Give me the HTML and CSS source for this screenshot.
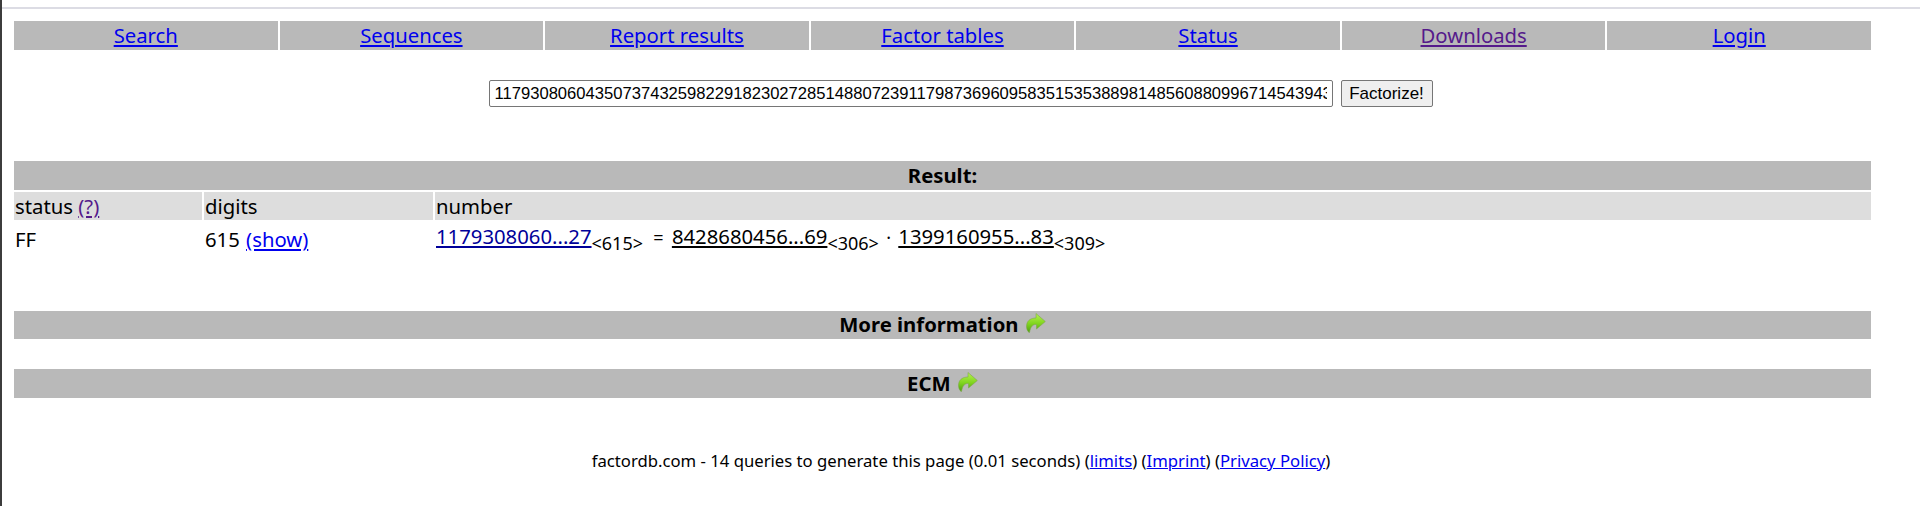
FILE: index.html
```html
<!DOCTYPE html>
<html lang="en">
<head>
    <meta charset="UTF-8">
    <meta name="viewport" content="width=device-width, initial-scale=1.0">
    <title>factordb.com</title>
    <link rel="stylesheet" href="styles.css">
</head>
<body>

<div class="topline"></div>

<div class="page">
    <nav class="nav">
        <div class="nav-cell"><a href="#search">Search</a></div>
        <div class="nav-cell"><a href="#sequences">Sequences</a></div>
        <div class="nav-cell"><a href="#report">Report results</a></div>
        <div class="nav-cell"><a href="#tables">Factor tables</a></div>
        <div class="nav-cell"><a href="#status">Status</a></div>
        <div class="nav-cell"><a class="visited" href="#downloads">Downloads</a></div>
        <div class="nav-cell"><a href="#login">Login</a></div>
    </nav>

    <form class="search" onsubmit="return false">
        <input class="search-input" type="text" value="117930806043507374325982291823027285148807239117987369609583515353889814856088099671454394343">
        <button class="search-button" type="submit">Factorize!</button>
    </form>

    <div class="bar result-bar">Result:</div>
    <div class="result-grid">
        <div class="head">status <a class="visited" href="#help">(?)</a></div>
        <div class="head">digits</div>
        <div class="head">number</div>
        <div class="val">FF</div>
        <div class="val">615 <a href="#show">(show)</a></div>
        <div class="val num">
            <a class="num-link" href="#n">1179308060...27</a><sub>&lt;615&gt;</sub>
            <span class="eq">=</span>
            <a class="factor" href="#p">8428680456...69</a><sub>&lt;306&gt;</sub>
            <span class="dot">·</span>
            <a class="factor" href="#q">1399160955...83</a><sub>&lt;309&gt;</sub>
        </div>
    </div>

    <div class="bar more-bar">More information
        <svg class="arrow" viewBox="0 0 20 20"><use href="#go"></use></svg>
    </div>
    <div class="bar ecm-bar">ECM
        <svg class="arrow" viewBox="0 0 20 20"><use href="#go"></use></svg>
    </div>

    <p class="footer">factordb.com - 14 queries to generate this page (0.01 seconds) (<a href="#limits">limits</a>) (<a href="#imprint">Imprint</a>) (<a href="#privacy">Privacy Policy</a>)</p>
</div>

<svg class="defs" width="0" height="0">
    <defs>
        <linearGradient id="green" x1="0" y1="0" x2="0" y2="1">
            <stop offset="0" stop-color="#b6f24e"/>
            <stop offset="0.55" stop-color="#7fd41e"/>
            <stop offset="1" stop-color="#4f9e12"/>
        </linearGradient>
        <path id="go" d="M10 0.5 L19.3 8.5 L10.5 16 L10.5 11.5 C7 11 4.5 13.5 3.5 19.5 C1.5 19 0 15 0.7 11.5 C1.5 7 5.5 5 10 5 Z" fill="url(#green)" stroke="#7da84a" stroke-width="0.6"/>
    </defs>
</svg>

</body>
</html>
```

FILE: styles.css
```css
html, body {
    margin: 0;
    height: 100%;
}
body {
    font-family: "Noto Sans", sans-serif;
    font-size: 20.3px;
    color: #000;
    background-color: #fff;
    border-left: 2px solid #3c3c3c;
    box-sizing: border-box;
    overflow: hidden;
}
a {
    color: #0000ee;
}
a.visited {
    color: #551a8b;
}
.topline {
    height: 2px;
    margin-top: 7px;
    background-color: #dcdce4;
}
.page {
    padding: 12px 49px 0 12px;
}
.nav {
    display: grid;
    grid-template-columns: repeat(7, 1fr);
    gap: 2px;
}
.nav-cell {
    height: 29px;
    line-height: 29px;
    text-align: center;
    background-color: #b9b9b9;
}
.search {
    display: flex;
    justify-content: center;
    gap: 8px;
    margin-top: 30px;
    padding-left: 36px;
}
.search-input,
.search-button {
    font-family: "Liberation Sans", Arial, sans-serif;
    height: 27px;
    box-sizing: border-box;
    border: 1px solid #767676;
    border-radius: 2px;
}
.search-input {
    width: 844px;
    padding: 1px 5px;
    font-size: 16.6px;
    color: #000;
}
.search-button {
    width: 92px;
    padding: 0;
    font-size: 17px;
    background-color: #efefef;
}
.bar {
    height: 29px;
    line-height: 29px;
    font-weight: bold;
    text-align: center;
    background-color: #b9b9b9;
}
.result-bar {
    margin-top: 54px;
}
.result-grid {
    display: grid;
    grid-template-columns: 188px 229px 1fr;
    column-gap: 2px;
    margin-top: 2px;
}
.head {
    height: 28px;
    line-height: 28px;
    padding-left: 1px;
    background-color: #ddd;
}
.val {
    height: 34px;
    box-sizing: border-box;
    padding: 5px 1px 0;
    line-height: 28px;
    word-spacing: 1px;
}
.num {
    padding-top: 2px;
    white-space: nowrap;
    word-spacing: 0;
}
.num-link {
    color: #000099;
}
.factor {
    color: #000;
}
sub {
    font-size: 18px;
    line-height: 0;
    vertical-align: -6px;
}
.eq {
    margin: 0 3px 0 5px;
    font-size: 18px;
}
.dot {
    margin: 0 2px;
    font-size: 18px;
}
.more-bar {
    height: 28px;
    line-height: 27px;
    margin-top: 57px;
}
.ecm-bar {
    line-height: 28px;
    margin-top: 30px;
}
.arrow {
    width: 20px;
    height: 20px;
    margin-left: 2px;
    vertical-align: -1px;
}
.footer {
    margin: 52px 0 0;
    padding-left: 37px;
    font-size: 16.7px;
    line-height: 22px;
    text-align: center;
}
.defs {
    position: absolute;
}
```
